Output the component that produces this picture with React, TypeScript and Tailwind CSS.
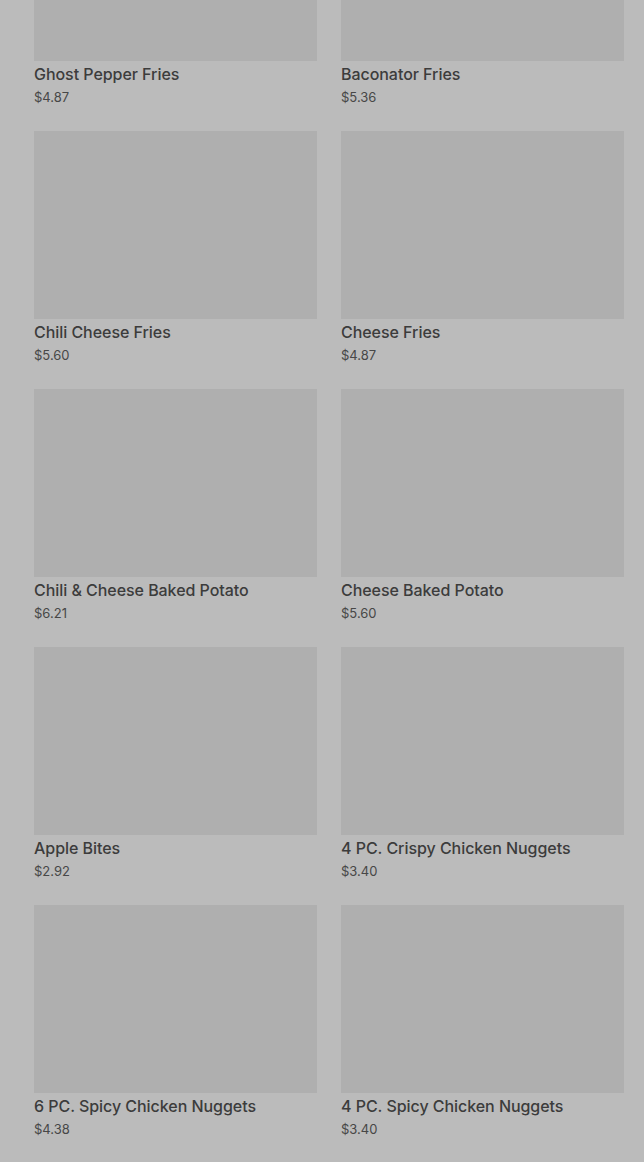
import React from "react";

const items: [string, string][] = [
  ["Ghost Pepper Fries", "$4.87"],
  ["Baconator Fries", "$5.36"],
  ["Chili Cheese Fries", "$5.60"],
  ["Cheese Fries", "$4.87"],
  ["Chili & Cheese Baked Potato", "$6.21"],
  ["Cheese Baked Potato", "$5.60"],
  ["Apple Bites", "$2.92"],
  ["4 PC. Crispy Chicken Nuggets", "$3.40"],
  ["6 PC. Spicy Chicken Nuggets", "$4.38"],
  ["4 PC. Spicy Chicken Nuggets", "$3.40"],
];

export default function App() {
  return (
    <div
      className="w-[644px] h-[1162px] overflow-hidden bg-[#bbbbbb]"
      style={{ fontFamily: "Inter, Roboto, 'Noto Sans', sans-serif" }}
    >
      <div className="-mt-[127px] pl-[34px] pr-[20px] grid grid-cols-2 gap-x-[24px] gap-y-[25px]">
        {items.map(([name, price]) => (
          <div key={name} className="flex flex-col">
            <div className="h-[188px] shrink-0 bg-[#afafaf]" />
            <div className="mt-[1px] text-[16px] leading-[24px] font-medium text-[#3c3c3c] tracking-[-0.05px]">
              {name}
            </div>
            <div className="mt-[2px] text-[13px] leading-[18px] text-[#474747]">{price}</div>
          </div>
        ))}
      </div>
    </div>
  );
}
